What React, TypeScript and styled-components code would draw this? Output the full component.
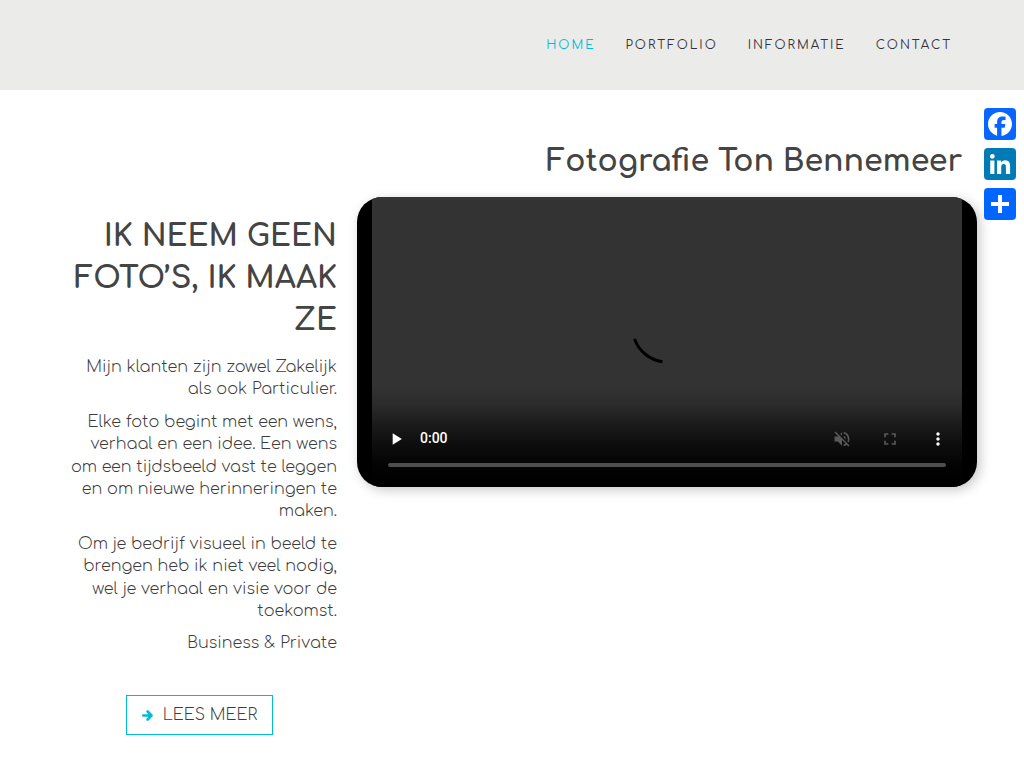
import React from 'react';
import styled, { createGlobalStyle } from 'styled-components';

const GlobalStyle = createGlobalStyle`
  *, *::before, *::after { box-sizing: border-box; }
  body {
    margin: 0;
    background: #fff;
    color: #3c3c3c;
    font-family: Comfortaa, Lato, sans-serif;
    font-size: 16px;
    font-weight: 300;
    line-height: 1.4;
  }
  h1, h2, p { margin: 0; }
`;

const Header = styled.header`
  display: flex;
  align-items: center;
  justify-content: flex-end;
  min-height: 90px;
  padding: 0 72px;
  background: #ebebe9;
`;

const Nav = styled.nav`
  display: flex;
  flex-wrap: wrap;
  gap: 30px;
`;

const NavLink = styled.a<{ $active?: boolean }>`
  color: ${p => (p.$active ? '#00bcd4' : '#32323a')};
  font-size: 12px;
  font-weight: 400;
  letter-spacing: 2px;
  text-decoration: none;
  text-transform: uppercase;
`;

const Main = styled.main`
  display: grid;
  grid-template-columns: 275fr 620fr;
  gap: 20px;
  padding: 51px 47px 33px 62px;
`;

const Intro = styled.section`
  display: flex;
  flex-direction: column;
  padding-top: 75px;
  text-align: right;
`;

const Heading = styled.h2`
  margin-bottom: 14px;
  color: #444;
  font-size: 30px;
  font-weight: 700;
  line-height: 42px;
  text-transform: uppercase;
`;

const Copy = styled.div`
  display: flex;
  flex-direction: column;
  gap: 10px;
  margin-bottom: 40px;
`;

const MoreButton = styled.button`
  display: flex;
  align-items: center;
  align-self: center;
  gap: 10px;
  height: 40px;
  padding: 1px 15px 0;
  border: 1px solid #00bcd4;
  background: transparent;
  color: #3c3c3c;
  font: inherit;
  text-transform: uppercase;
  cursor: pointer;

  svg { color: #00bcd4; }
`;

const Feature = styled.section`
  min-width: 0;
`;

const Title = styled.h1`
  margin-bottom: 14px;
  padding-right: 15px;
  color: #444;
  font-size: 30px;
  font-weight: 700;
  line-height: 42px;
  text-align: right;
`;

const Player = styled.div`
  padding: 0 15px;
  border-radius: 25px;
  background: #000;
  box-shadow: 3px 3px 12px rgba(0, 0, 0, 0.22);
  overflow: hidden;
`;

const Screen = styled.div`
  display: flex;
  flex-direction: column;
  height: 290px;
  background: linear-gradient(#333 0, #333 188px, #2b2b2b 208px, #1c1c1c 226px, #0d0d0d 248px, #030303 268px, #000 290px);
`;

const Loading = styled.div`
  display: flex;
  flex: 1;
  align-items: center;
  justify-content: center;
  padding-top: 42px;
`;

const Controls = styled.div`
  display: flex;
  align-items: center;
  height: 48px;
  color: #fff;
  font-family: Roboto, sans-serif;
  font-size: 14px;
  font-weight: 500;
`;

const Time = styled.span`
  flex: 1;
`;

const Control = styled.button`
  display: grid;
  place-items: center;
  width: 48px;
  height: 48px;
  padding: 0;
  border: 0;
  background: none;
  color: #fff;
  cursor: pointer;

  &:disabled { color: #595959; cursor: default; }
`;

const Seek = styled.input`
  appearance: none;
  display: block;
  height: 4px;
  margin: 0 16px 20px;
  border-radius: 2px;
  background: #4d4d4d;

  &::-webkit-slider-thumb { appearance: none; width: 0; height: 0; }
`;

const Share = styled.aside`
  position: fixed;
  top: 108px;
  right: 8px;
  display: flex;
  flex-direction: column;
  gap: 8px;
`;

const ShareLink = styled.a<{ $color: string }>`
  display: block;
  width: 32px;
  height: 32px;
  border-radius: 4px;
  background: ${p => p.$color};

  svg { display: block; fill: #fff; }
`;

const links = ['Home', 'Portfolio', 'Informatie', 'Contact'];

const paragraphs = [
  'Mijn klanten zijn zowel Zakelijk als ook Particulier.',
  'Elke foto begint met een wens, verhaal en een idee. Een wens om een tijdsbeeld vast te leggen en om nieuwe herinneringen te maken.',
  'Om je bedrijf visueel in beeld te brengen heb ik niet veel nodig, wel je verhaal en visie voor de toekomst.',
  'Business & Private',
];

const shares = [
  {
    label: 'Facebook',
    color: '#0866ff',
    path: 'M28 16c0-6.627-5.373-12-12-12S4 9.373 4 16c0 5.628 3.875 10.35 9.101 11.647v-7.98h-2.474V16H13.1v-1.58c0-4.085 1.849-5.978 5.859-5.978.76 0 2.072.15 2.608.298v3.325c-.283-.03-.775-.045-1.386-.045-1.967 0-2.728.745-2.728 2.683V16h3.92l-.673 3.667h-3.247v8.245C23.395 27.195 28 22.135 28 16',
  },
  {
    label: 'LinkedIn',
    color: '#007bb5',
    path: 'M6.227 12.61h4.19v13.48h-4.19zm2.095-6.7a2.43 2.43 0 0 1 0 4.86c-1.344 0-2.428-1.09-2.428-2.43s1.084-2.43 2.428-2.43m4.72 6.7h4.02v1.84h.058c.56-1.058 1.927-2.176 3.965-2.176 4.238 0 5.02 2.792 5.02 6.42v7.395h-4.183v-6.56c0-1.564-.03-3.574-2.178-3.574-2.18 0-2.514 1.7-2.514 3.46v6.668h-4.187z',
  },
  { label: 'Delen', color: '#0166ff', path: 'M14 7h4v18h-4z M7 14h18v4H7z' },
];

const glyphs = {
  play: 'M8 5v14l11-7z',
  mute: 'M16.5 12c0-1.77-1.02-3.29-2.5-4.03v2.21l2.45 2.45c.03-.2.05-.41.05-.63zm2.5 0c0 .94-.2 1.82-.54 2.64l1.51 1.51C20.63 14.91 21 13.5 21 12c0-4.28-2.99-7.86-7-8.77v2.06c2.89.86 5 3.54 5 6.71zM4.27 3L3 4.27 7.73 9H3v6h4l5 5v-6.73l4.25 4.25c-.67.52-1.42.93-2.25 1.18v2.06c1.38-.31 2.63-.95 3.69-1.81L19.73 21 21 19.73l-9-9L4.27 3zM12 4L9.91 6.09 12 8.18V4z',
  full: 'M7 14H5v5h5v-2H7v-3zm-2-4h2V7h3V5H5v5zm12 7h-3v2h5v-5h-2v3zM14 5v2h3v3h2V5h-5z',
  more: 'M12 8c1.1 0 2-.9 2-2s-.9-2-2-2-2 .9-2 2 .9 2 2 2zm0 2c-1.1 0-2 .9-2 2s.9 2 2 2 2-.9 2-2-.9-2-2-2zm0 6c-1.1 0-2 .9-2 2s.9 2 2 2 2-.9 2-2-.9-2-2-2z',
};

function Glyph({ name }: { name: keyof typeof glyphs }) {
  return (
    <svg width="20" height="20" viewBox="0 0 24 24" fill="currentColor" aria-hidden="true">
      <path d={glyphs[name]} />
    </svg>
  );
}

export default function App() {
  return (
    <>
      <GlobalStyle />
      <Header>
        <Nav>
          {links.map((link, i) => (
            <NavLink key={link} href={`#${link.toLowerCase()}`} $active={i === 0}>{link}</NavLink>
          ))}
        </Nav>
      </Header>
      <Main>
        <Intro>
          <Heading>Ik neem geen foto’s, ik maak ze</Heading>
          <Copy>
            {paragraphs.map(text => <p key={text}>{text}</p>)}
          </Copy>
          <MoreButton type="button">
            <svg width="11" height="12" viewBox="0 0 11 12" fill="none" stroke="currentColor" strokeWidth="2.6" strokeLinecap="round" strokeLinejoin="round" aria-hidden="true">
              <path d="M1.300 6.500H9M5.600 2.500L9.500 6.500L5.600 10.500" />
            </svg>
            Lees meer
          </MoreButton>
        </Intro>
        <Feature>
          <Title>Fotografie Ton Bennemeer</Title>
          <Player>
            <Screen>
              <Loading>
                <svg width="72" height="74" viewBox="0 0 72 74" fill="none" aria-hidden="true">
                  <path d="M3.500 49A35 35 0 0 0 31.500 71.700" stroke="#000" strokeWidth="3" />
                </svg>
              </Loading>
              <Controls>
                <Control type="button" aria-label="Afspelen"><Glyph name="play" /></Control>
                <Time>0:00</Time>
                <Control type="button" aria-label="Geluid" disabled><Glyph name="mute" /></Control>
                <Control type="button" aria-label="Volledig scherm" disabled><Glyph name="full" /></Control>
                <Control type="button" aria-label="Meer opties"><Glyph name="more" /></Control>
              </Controls>
              <Seek type="range" min="0" max="100" defaultValue="0" aria-label="Positie" />
            </Screen>
          </Player>
        </Feature>
      </Main>
      <Share>
        {shares.map(s => (
          <ShareLink key={s.label} href="#delen" aria-label={s.label} $color={s.color}>
            <svg width="32" height="32" viewBox="0 0 32 32" aria-hidden="true"><path d={s.path} /></svg>
          </ShareLink>
        ))}
      </Share>
    </>
  );
}
